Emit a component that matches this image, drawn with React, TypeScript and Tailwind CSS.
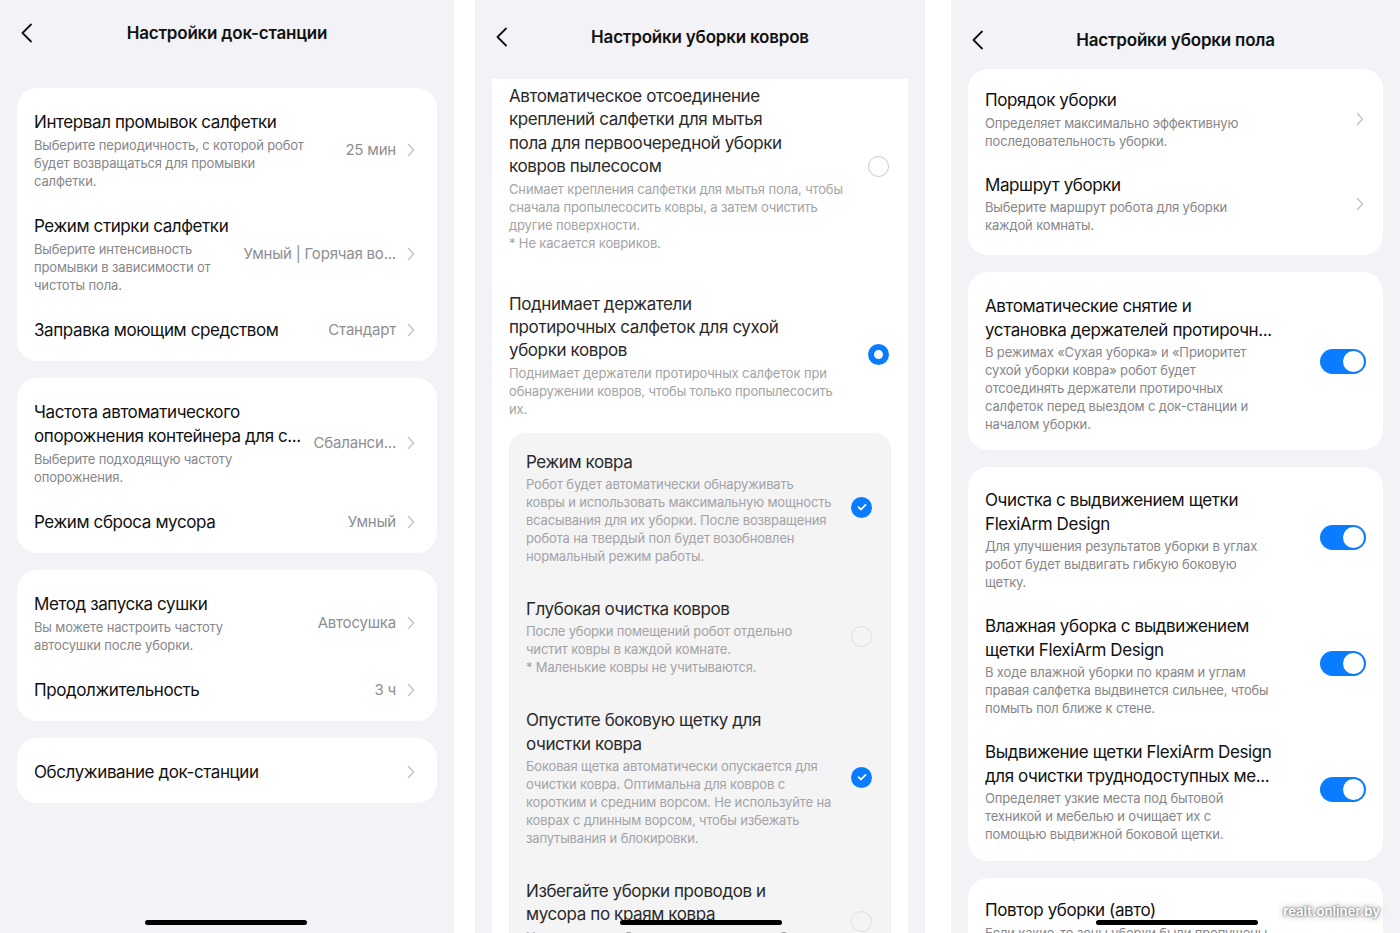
import React from "react";

type Line = string[];

function BackChevron() {
  return (
    <svg width="13" height="20" viewBox="0 0 13 20" fill="none">
      <path d="M11 1.5 L2.5 10 L11 18.5" stroke="#111" strokeWidth="1.8" strokeLinecap="round" strokeLinejoin="round" />
    </svg>
  );
}

function Chevron() {
  return (
    <svg width="8" height="14" viewBox="0 0 8 14" fill="none" className="shrink-0">
      <path d="M1.5 1.5 L6.5 7 L1.5 12.5" stroke="#c4c4c8" strokeWidth="1.4" strokeLinecap="round" strokeLinejoin="round" />
    </svg>
  );
}

function Header({ title, pt, pb }: { title: string; pt: string; pb: string }) {
  return (
    <div className={`grid grid-cols-[1fr_auto_1fr] items-center ${pt} ${pb}`}>
      <div className="pl-[20px] flex items-center">
        <BackChevron />
      </div>
      <h1 className="text-[17px] leading-[24px] font-semibold tracking-[-0.2px] text-[#111]">{title}</h1>
      <div />
    </div>
  );
}

function Desc({ lines, color }: { lines: Line; color: string }) {
  return (
    <div className="mt-[2px]">
      {lines.map((l) => (
        <div key={l} className={`text-[13px] leading-[18px] tracking-[-0.15px] whitespace-nowrap ${color}`}>
          {l}
        </div>
      ))}
    </div>
  );
}

function Title({ lines, color, leading }: { lines: Line; color: string; leading: string }) {
  return (
    <div>
      {lines.map((l) => (
        <div key={l} className={`text-[17px] tracking-[-0.4px] whitespace-nowrap ${leading} ${color}`}>
          {l}
        </div>
      ))}
    </div>
  );
}

/* ---------- panel 1 ---------- */

type DockRowProps = { title: Line; desc?: Line; value?: string };

function DockRow({ title, desc, value }: DockRowProps) {
  return (
    <div className="flex items-center py-[12px] pl-[17px] pr-[22px]">
      <div className="flex-1 min-w-0">
        <Title lines={title} color="text-[#111]" leading="leading-[24px]" />
        {desc && <Desc lines={desc} color="text-[#86868a]" />}
      </div>
      {value && (
        <span className="text-[15px] tracking-[-0.2px] text-[#8e8e93] mr-[11px] whitespace-nowrap">{value}</span>
      )}
      <Chevron />
    </div>
  );
}

function DockCard({ rows }: { rows: DockRowProps[] }) {
  return (
    <div className="mx-[17px] bg-white rounded-[20px] pt-[10px] pb-[7px]">
      {rows.map((r) => (
        <DockRow key={r.title.join()} {...r} />
      ))}
    </div>
  );
}

function HomeBar() {
  return <div className="absolute bottom-[8px] left-[145px] w-[162px] h-[5px] rounded-full bg-black" />;
}

function DockPanel() {
  return (
    <div className="relative w-[454px] h-full bg-[#f2f2f7] overflow-hidden shrink-0">
      <Header title="Настройки док-станции" pt="pt-[21px]" pb="pb-[43px]" />
      <div className="flex flex-col gap-[17px]">
        <DockCard
          rows={[
            {
              title: ["Интервал промывок салфетки"],
              desc: ["Выберите периодичность, с которой робот", "будет возвращаться для промывки", "салфетки."],
              value: "25 мин",
            },
            {
              title: ["Режим стирки салфетки"],
              desc: ["Выберите интенсивность", "промывки в зависимости от", "чистоты пола."],
              value: "Умный | Горячая во...",
            },
            { title: ["Заправка моющим средством"], value: "Стандарт" },
          ]}
        />
        <DockCard
          rows={[
            {
              title: ["Частота автоматического", "опорожнения контейнера для с..."],
              desc: ["Выберите подходящую частоту", "опорожнения."],
              value: "Сбаланси...",
            },
            { title: ["Режим сброса мусора"], value: "Умный" },
          ]}
        />
        <DockCard
          rows={[
            {
              title: ["Метод запуска сушки"],
              desc: ["Вы можете настроить частоту", "автосушки после уборки."],
              value: "Автосушка",
            },
            { title: ["Продолжительность"], value: "3 ч" },
          ]}
        />
        <DockCard rows={[{ title: ["Обслуживание док-станции"] }]} />
      </div>
      <HomeBar />
    </div>
  );
}

/* ---------- panel 2 ---------- */

function Radio({ on }: { on: boolean }) {
  if (on) {
    return <div className="w-[21px] h-[21px] rounded-full border-[6px] border-[#0a7cff] bg-white shrink-0 mb-[2px]" />;
  }
  return <div className="w-[21px] h-[21px] rounded-full border-[1.5px] border-[#c7c7cc] shrink-0 mb-[3px]" />;
}

function Check({ on }: { on: boolean }) {
  if (!on) return <div className="w-[21px] h-[21px] rounded-full border border-[#dedee2] shrink-0" />;
  return (
    <div className="w-[21px] h-[21px] rounded-full bg-[#0a7cff] flex items-center justify-center shrink-0">
      <svg width="10" height="8" viewBox="0 0 10 8" fill="none">
        <path d="M1.5 4.2 L4 6.5 L8.5 1.8" stroke="white" strokeWidth="1.7" strokeLinecap="round" strokeLinejoin="round" />
      </svg>
    </div>
  );
}

type CarpetProps = { title: Line; desc: Line; control: React.ReactNode; leading: string; className?: string };

function CarpetItem({ title, desc, control, leading, className = "" }: CarpetProps) {
  return (
    <div className={`flex items-center ${className}`}>
      <div className="flex-1 min-w-0">
        <Title lines={title} color="text-[#2a2a2a]" leading={leading} />
        <div className="-mt-[1px]">
          <Desc lines={desc} color="text-[#a3a3a6]" />
        </div>
      </div>
      {control}
    </div>
  );
}

function CarpetPanel() {
  return (
    <div className="relative w-[450px] h-full bg-[#f2f2f7] overflow-hidden shrink-0">
      <Header title="Настройки уборки ковров" pt="pt-[25px]" pb="pb-[30px]" />
      <div className="mx-[17px] bg-white pl-[17px] pr-[19px] pt-[6px] pb-[40px]">
        <CarpetItem
          leading="leading-[23.4px]"
          title={["Автоматическое отсоединение", "креплений салфетки для мытья", "пола для первоочередной уборки", "ковров пылесосом"]}
          desc={[
            "Снимает крепления салфетки для мытья пола, чтобы",
            "сначала пропылесосить ковры, а затем очистить",
            "другие поверхности.",
            "* Не касается ковриков.",
          ]}
          control={<Radio on={false} />}
        />
        <CarpetItem
          leading="leading-[23.4px]"
          className="mt-[41px]"
          title={["Поднимает держатели", "протирочных салфеток для сухой", "уборки ковров"]}
          desc={["Поднимает держатели протирочных салфеток при", "обнаружении ковров, чтобы только пропылесосить", "их."]}
          control={<Radio on={true} />}
        />
        <div className="mt-[15px] -mr-[2px] bg-[#f4f4f5] rounded-[16px] pl-[17px] pr-[19px] pt-[17px] pb-[30px] flex flex-col gap-[32px]">
          <CarpetItem
            leading="leading-[24px]"
            title={["Режим ковра"]}
            desc={[
              "Робот будет автоматически обнаруживать",
              "ковры и использовать максимальную мощность",
              "всасывания для их уборки. После возвращения",
              "робота на твердый пол будет возобновлен",
              "нормальный режим работы.",
            ]}
            control={<Check on={true} />}
          />
          <CarpetItem
            leading="leading-[24px]"
            title={["Глубокая очистка ковров"]}
            desc={["После уборки помещений робот отдельно", "чистит ковры в каждой комнате.", "* Маленькие ковры не учитываются."]}
            control={<Check on={false} />}
          />
          <CarpetItem
            leading="leading-[24px]"
            title={["Опустите боковую щетку для", "очистки ковра"]}
            desc={[
              "Боковая щетка автоматически опускается для",
              "очистки ковра. Оптимальна для ковров с",
              "коротким и средним ворсом. Не используйте на",
              "коврах с длинным ворсом, чтобы избежать",
              "запутывания и блокировки.",
            ]}
            control={<Check on={true} />}
          />
          <CarpetItem
            leading="leading-[23.5px]"
            className="mt-[1px]"
            title={["Избегайте уборки проводов и", "мусора по краям ковра"]}
            desc={["Не выполняет уборку кромок ковра, чтобы", "избежать запутывания."]}
            control={<Check on={false} />}
          />
        </div>
      </div>
      <HomeBar />
    </div>
  );
}

/* ---------- panel 3 ---------- */

function Toggle() {
  return (
    <div className="w-[46px] h-[25px] rounded-full bg-[#0a7cff] flex items-center justify-end pr-[2px] shrink-0 mb-[5px]">
      <div className="w-[21px] h-[21px] rounded-full bg-white" />
    </div>
  );
}

type FloorRowProps = { title: Line; desc: Line; kind: "chevron" | "toggle" | "none" };

function FloorRow({ title, desc, kind }: FloorRowProps) {
  return (
    <div className={`flex items-center py-[12px] pl-[17px] ${kind === "chevron" ? "pr-[19px]" : "pr-[17px]"}`}>
      <div className="flex-1 min-w-0">
        <Title lines={title} color="text-[#111]" leading="leading-[23.5px]" />
        <div className="-mt-[1px]">
          <Desc lines={desc} color="text-[#86868a]" />
        </div>
      </div>
      {kind === "chevron" && <Chevron />}
      {kind === "toggle" && <Toggle />}
    </div>
  );
}

function FloorCard({ rows, pad }: { rows: FloorRowProps[]; pad: string }) {
  return (
    <div className={`mx-[17px] bg-white rounded-[20px] ${pad}`}>
      {rows.map((r) => (
        <FloorRow key={r.title.join()} {...r} />
      ))}
    </div>
  );
}

function FloorPanel() {
  return (
    <div className="relative w-[449px] h-full bg-[#f2f2f7] overflow-hidden shrink-0">
      <Header title="Настройки уборки пола" pt="pt-[28px]" pb="pb-[17px]" />
      <div className="flex flex-col gap-[17px]">
        <FloorCard
          pad="pt-[8px] pb-[9px]"
          rows={[
            {
              title: ["Порядок уборки"],
              desc: ["Определяет максимально эффективную", "последовательность уборки."],
              kind: "chevron",
            },
            {
              title: ["Маршрут уборки"],
              desc: ["Выберите маршрут робота для уборки", "каждой комнаты."],
              kind: "chevron",
            },
          ]}
        />
        <FloorCard
          pad="pt-[11px] pb-[5px]"
          rows={[
            {
              title: ["Автоматические снятие и", "установка держателей протирочн..."],
              desc: [
                "В режимах «Сухая уборка» и «Приоритет",
                "сухой уборки ковра» робот будет",
                "отсоединять держатели протирочных",
                "салфеток перед выездом с док-станции и",
                "началом уборки.",
              ],
              kind: "toggle",
            },
          ]}
        />
        <FloorCard
          pad="pt-[10px] pb-[6px]"
          rows={[
            {
              title: ["Очистка с выдвижением щетки", "FlexiArm Design"],
              desc: ["Для улучшения результатов уборки в углах", "робот будет выдвигать гибкую боковую", "щетку."],
              kind: "toggle",
            },
            {
              title: ["Влажная уборка с выдвижением", "щетки FlexiArm Design"],
              desc: ["В ходе влажной уборки по краям и углам", "правая салфетка выдвинется сильнее, чтобы", "помыть пол ближе к стене."],
              kind: "toggle",
            },
            {
              title: ["Выдвижение щетки FlexiArm Design", "для очистки труднодоступных ме..."],
              desc: ["Определяет узкие места под бытовой", "техникой и мебелью и очищает их с", "помощью выдвижной боковой щетки."],
              kind: "toggle",
            },
          ]}
        />
        <FloorCard
          pad="pt-[9px] pb-[7px]"
          rows={[
            {
              title: ["Повтор уборки (авто)"],
              desc: ["Если какие-то зоны уборки были пропущены,", "робот вернется к ним."],
              kind: "none",
            },
          ]}
        />
      </div>
      <HomeBar />
      <span className="absolute right-[20px] bottom-[14px] text-[13px] leading-[16px] font-bold text-white [text-shadow:0_0_2px_rgba(0,0,0,0.7),0_0_7px_rgba(0,0,0,0.45)]">
        realt.onliner.by
      </span>
    </div>
  );
}

export default function App() {
  return (
    <div className="w-[1400px] h-[933px] bg-white flex font-['Inter','Noto_Sans',sans-serif] overflow-hidden">
      <DockPanel />
      <div className="w-[21px] shrink-0" />
      <CarpetPanel />
      <div className="w-[26px] shrink-0" />
      <FloorPanel />
    </div>
  );
}
